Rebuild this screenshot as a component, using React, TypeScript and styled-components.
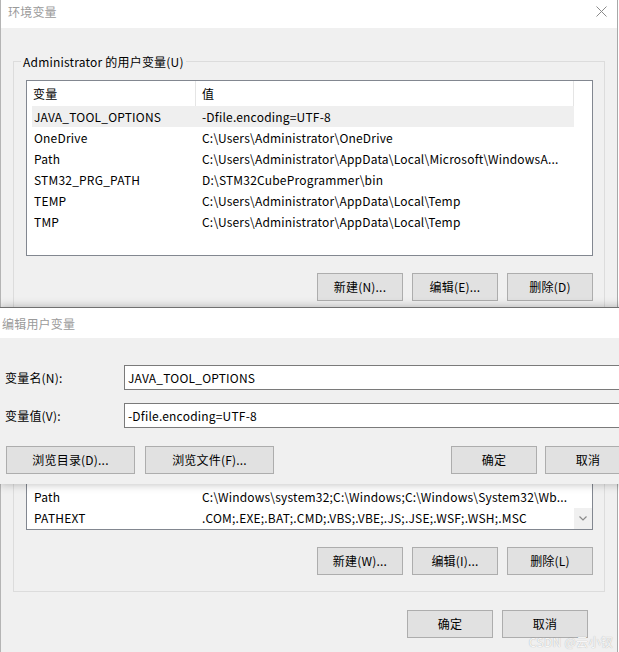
import React from "react";
import styled, { createGlobalStyle } from "styled-components";

const FONT = `"Noto Sans CJK SC", "Microsoft YaHei", sans-serif`;

const Global = createGlobalStyle`
  html, body { margin: 0; padding: 0; background: #fff; overflow: hidden; }
  body { font-family: ${FONT}; font-size: 12px; color: #000; letter-spacing: 0.2px; }
  * { box-sizing: border-box; }
`;

const Page = styled.div`
  position: relative;
  width: 619px;
  height: 652px;
  overflow: hidden;
  background: #fff;
`;

const Window = styled.div`
  width: 618px;
  height: 652px;
  border-left: 1px solid #b4b4b4;
  border-right: 1px solid #a8a8a8;
  display: flex;
  flex-direction: column;
  background: #f0f0f0;
`;

const TitleBar = styled.div`
  height: 28px;
  flex: none;
  background: #fff;
  display: flex;
  align-items: flex-start;
  justify-content: space-between;
  padding: 4px 10px 0 7px;
`;

const TitleText = styled.span`
  line-height: 16px;
  color: #9a9a9a;
  font-size: 12px;
`;

const CloseIcon = styled.svg`
  margin-top: 2px;
  display: block;
`;

const Body = styled.div`
  flex: 1;
  display: flex;
  flex-direction: column;
  padding: 33px 12px 0 12px;
`;

const GroupBox = styled.div<{ $gap?: number }>`
  position: relative;
  border: 1px solid #dcdcdc;
  margin-top: ${(p) => p.$gap ?? 0}px;
  padding: 18px 11px 16px 12px;
  display: flex;
  flex-direction: column;
`;

const Legend = styled.span`
  position: absolute;
  top: -9px;
  left: 7px;
  padding: 0 2px;
  background: #f0f0f0;
  line-height: 17px;
  color: #000;
`;

const ListBox = styled.div`
  height: 176px;
  border: 1px solid #828790;
  background: #fff;
  display: flex;
  overflow: hidden;
`;

const ListContent = styled.div<{ $toBottom?: boolean }>`
  flex: 1;
  margin-left: 5px;
  display: flex;
  flex-direction: column;
  justify-content: ${(p) => (p.$toBottom ? "flex-end" : "flex-start")};
  padding-bottom: ${(p) => (p.$toBottom ? 1 : 0)}px;
`;

const HeaderRow = styled.div`
  flex: none;
  height: 25px;
  display: grid;
  grid-template-columns: 164px 1fr;
  border-right: 1px solid #e5e5e5;
  background: #fff;
`;

const HeaderCell = styled.div<{ $first?: boolean }>`
  display: flex;
  align-items: center;
  padding-left: ${(p) => (p.$first ? 1 : 6)}px;
  padding-bottom: 1px;
  border-right: ${(p) => (p.$first ? "1px solid #e5e5e5" : "none")};
`;

const Row = styled.div<{ $selected?: boolean }>`
  flex: none;
  height: 21px;
  display: grid;
  grid-template-columns: 164px 1fr;
  align-items: center;
  padding-bottom: 1px;
  background: ${(p) => (p.$selected ? "#efefef" : "transparent")};
  white-space: nowrap;
`;

const NameCell = styled.span`
  padding-left: 2px;
  overflow: hidden;
`;

const ValueCell = styled.span`
  padding-left: 6px;
  overflow: hidden;
`;

const ScrollTrack = styled.div`
  width: 18px;
  flex: none;
  display: flex;
  flex-direction: column;
  justify-content: flex-end;
  background: #fff;
`;

const ScrollButton = styled.div`
  height: 21px;
  background: #f0f0f0;
  display: flex;
  align-items: center;
  justify-content: center;
`;

const ButtonRow = styled.div<{ $top?: number; $right?: number }>`
  display: flex;
  justify-content: flex-end;
  gap: 9px;
  margin-top: ${(p) => p.$top ?? 17}px;
  padding-right: ${(p) => p.$right ?? 0}px;
`;

const Button = styled.button<{ $w?: number }>`
  width: ${(p) => p.$w ?? 86}px;
  height: 28px;
  border: 1px solid #adadad;
  background: #e1e1e1;
  font-family: ${FONT};
  font-size: 12px;
  letter-spacing: 0.2px;
  color: #000;
  padding: 0 0 1px;
  margin: 0;
  white-space: nowrap;
`;

const Dialog = styled.div`
  position: absolute;
  top: 307px;
  left: 0;
  width: 650px;
  border-top: 1px solid #707070;
  box-shadow: 0 0 9px rgba(0, 0, 0, 0.28);
  display: flex;
  flex-direction: column;
`;

const DialogTitle = styled.div`
  height: 30px;
  background: #fff;
  display: flex;
  align-items: center;
  padding-left: 2px;
  color: #9a9a9a;
`;

const DialogBody = styled.div`
  background: #f0f0f0;
  padding: 27px 19px 10px 5px;
  display: flex;
  flex-direction: column;
`;

const FieldRow = styled.div<{ $top?: number }>`
  display: flex;
  align-items: center;
  margin-top: ${(p) => p.$top ?? 0}px;
`;

const FieldLabel = styled.label`
  width: 119px;
  flex: none;
`;

const FieldInput = styled.div`
  flex: 1;
  height: 25px;
  border: 1px solid #7a7a7a;
  background: #fff;
  display: flex;
  align-items: center;
  padding: 0 0 1px 3px;
`;

const DialogButtons = styled.div`
  display: flex;
  justify-content: space-between;
  margin-top: 18px;
  padding-left: 1px;
`;

const ButtonGroup = styled.div<{ $gap: number }>`
  display: flex;
  gap: ${(p) => p.$gap}px;
`;

const Watermark = styled.span`
  position: absolute;
  right: 6px;
  bottom: 3px;
  font-size: 12px;
  line-height: 14px;
  color: rgba(255, 255, 255, 0.92);
  text-shadow: 0 0 1px rgba(0, 0, 0, 0.35);
  letter-spacing: 0.3px;
`;

type Item = [string, string];

const userVars: Item[] = [
  ["JAVA_TOOL_OPTIONS", "-Dfile.encoding=UTF-8"],
  ["OneDrive", "C:\\Users\\Administrator\\OneDrive"],
  ["Path", "C:\\Users\\Administrator\\AppData\\Local\\Microsoft\\WindowsA..."],
  ["STM32_PRG_PATH", "D:\\STM32CubeProgrammer\\bin"],
  ["TEMP", "C:\\Users\\Administrator\\AppData\\Local\\Temp"],
  ["TMP", "C:\\Users\\Administrator\\AppData\\Local\\Temp"],
];

/* The system list is scrolled to its end: only its last rows are visible below the edit dialog. */
const sysVarsVisible: Item[] = [
  ["Path", "C:\\Windows\\system32;C:\\Windows;C:\\Windows\\System32\\Wb..."],
  ["PATHEXT", ".COM;.EXE;.BAT;.CMD;.VBS;.VBE;.JS;.JSE;.WSF;.WSH;.MSC"],
];

function VarList({
  items,
  selected,
  scrolled,
}: {
  items: Item[];
  selected?: number;
  scrolled?: boolean;
}) {
  return (
    <ListBox>
      <ListContent $toBottom={scrolled}>
        {!scrolled && (
          <HeaderRow>
            <HeaderCell $first>变量</HeaderCell>
            <HeaderCell>值</HeaderCell>
          </HeaderRow>
        )}
        {items.map(([n, v], i) => (
          <Row key={n + i} $selected={i === selected}>
            <NameCell>{n}</NameCell>
            <ValueCell>{v}</ValueCell>
          </Row>
        ))}
      </ListContent>
      <ScrollTrack>
        {scrolled && (
          <ScrollButton>
            <svg width="8" height="5" viewBox="0 0 8 5">
              <polyline points="0.5,0.5 4,4 7.5,0.5" fill="none" stroke="#8a8a8a" strokeWidth="1.2" />
            </svg>
          </ScrollButton>
        )}
      </ScrollTrack>
    </ListBox>
  );
}

export default function App() {
  return (
    <Page>
      <Global />
      <Window>
        <TitleBar>
          <TitleText>环境变量</TitleText>
          <CloseIcon width="11" height="11" viewBox="0 0 11 11">
            <path d="M0.5 0.5 L10.5 10.5 M10.5 0.5 L0.5 10.5" stroke="#8a8a8a" strokeWidth="1" fill="none" />
          </CloseIcon>
        </TitleBar>
        <Body>
          <GroupBox>
            <Legend>Administrator 的用户变量(U)</Legend>
            <VarList items={userVars} selected={0} />
            <ButtonRow>
              <Button>新建(N)...</Button>
              <Button>编辑(E)...</Button>
              <Button>删除(D)</Button>
            </ButtonRow>
          </GroupBox>
          <GroupBox $gap={17}>
            <VarList items={sysVarsVisible} scrolled />
            <ButtonRow>
              <Button>新建(W)...</Button>
              <Button>编辑(I)...</Button>
              <Button>删除(L)</Button>
            </ButtonRow>
          </GroupBox>
          <ButtonRow $top={18} $right={17}>
            <Button>确定</Button>
            <Button>取消</Button>
          </ButtonRow>
        </Body>
      </Window>

      <Dialog>
        <DialogTitle>编辑用户变量</DialogTitle>
        <DialogBody>
          <FieldRow>
            <FieldLabel>变量名(N):</FieldLabel>
            <FieldInput>JAVA_TOOL_OPTIONS</FieldInput>
          </FieldRow>
          <FieldRow $top={13}>
            <FieldLabel>变量值(V):</FieldLabel>
            <FieldInput>-Dfile.encoding=UTF-8</FieldInput>
          </FieldRow>
          <DialogButtons>
            <ButtonGroup $gap={10}>
              <Button $w={129}>浏览目录(D)...</Button>
              <Button $w={129}>浏览文件(F)...</Button>
            </ButtonGroup>
            <ButtonGroup $gap={8}>
              <Button>确定</Button>
              <Button>取消</Button>
            </ButtonGroup>
          </DialogButtons>
        </DialogBody>
      </Dialog>

      <Watermark>CSDN @云小钗</Watermark>
    </Page>
  );
}
